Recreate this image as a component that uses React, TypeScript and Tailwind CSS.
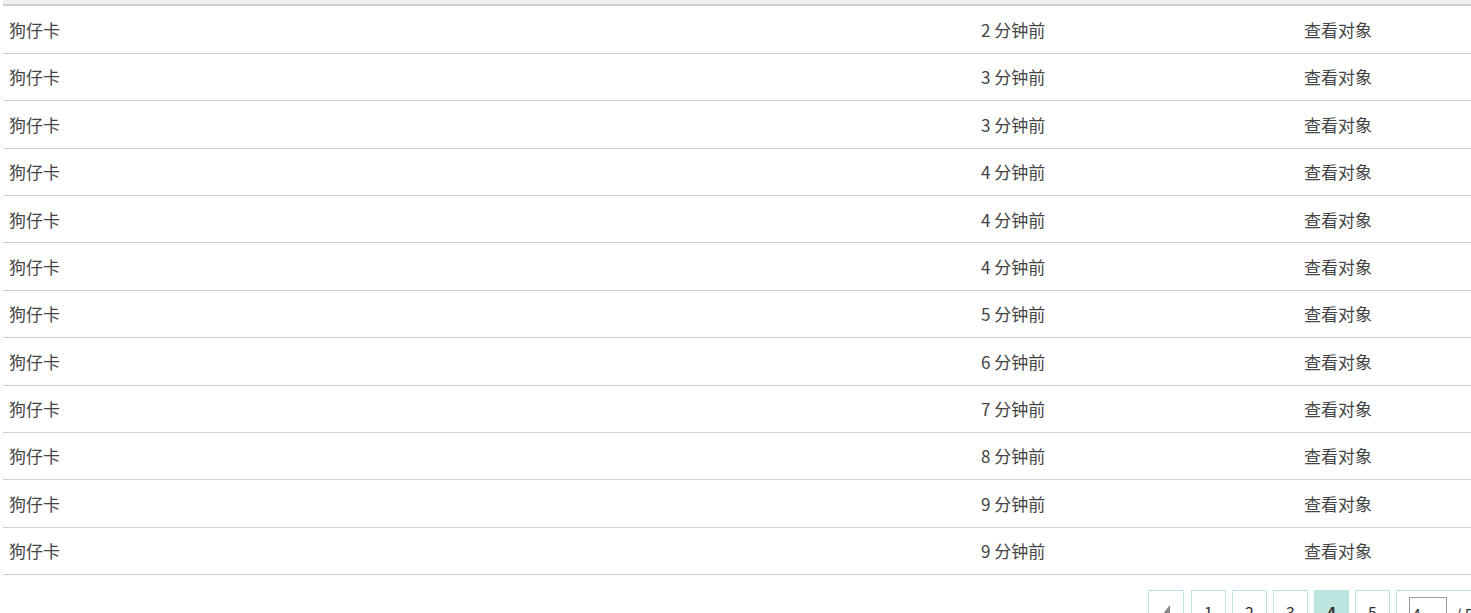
import React from 'react';

const times = ['2', '3', '3', '4', '4', '4', '5', '6', '7', '8', '9', '9'];

const PageButton: React.FC<{ label: React.ReactNode; active?: boolean }> = ({ label, active }) => (
    <div
        className={`flex h-[38px] w-[35px] shrink-0 justify-center border border-[#b8e4de] pt-[11px] text-[16px] leading-[20px] text-[#333] ${
            active ? 'bg-[#bde5df] font-bold' : 'bg-white'
        }`}
    >
        {label}
    </div>
);

const App: React.FC = () => {
    return (
        <div
            className="h-[613px] w-[1471px] overflow-hidden bg-white text-[#444]"
            style={{ fontFamily: '"Microsoft YaHei", "Noto Sans CJK SC", "Liberation Sans", sans-serif' }}
        >
            <div className="ml-[3px] w-[1500px]">
                <div className="box-content h-[4px] border-b-2 border-[#cccccc] bg-[#f0f0f0]" />
                <table className="w-[1500px] border-collapse text-[17px]">
                    <tbody>
                        {times.map((t, i) => (
                            <tr key={i} className="h-[47.4px] border-b border-[#cfcfcf]">
                                <td className="w-[972px] pl-[6px]">狗仔卡</td>
                                <td className="w-[323px] pl-[6px]">{t} 分钟前</td>
                                <td className="pl-[6px]">查看对象</td>
                            </tr>
                        ))}
                    </tbody>
                </table>
            </div>
            <div className="mt-[15px] flex w-max items-start gap-[6px] pl-[1148px]">
                <div className="mr-[1px] flex h-[38px] w-[36px] shrink-0 items-start justify-center border border-[#b8e4de] pt-[14px]">
                    <svg width="8" height="10" viewBox="0 0 8 10">
                        <polygon points="8,0 8,10 0,10" fill="#888" />
                    </svg>
                </div>
                <PageButton label="1" />
                <PageButton label="2" />
                <PageButton label="3" />
                <PageButton label="4" active />
                <PageButton label="5" />
                <div className="flex h-[38px] w-[120px] shrink-0 items-start gap-[8px] border border-[#b8e4de] pl-[12px] pt-[6px] text-[16px] text-[#333]">
                    <div className="h-[26px] w-[38px] shrink-0 border border-[#999] pl-[2px] pt-[4px] leading-[24px]">4</div>
                    <span className="pt-[5px]">/ 5</span>
                </div>
            </div>
        </div>
    );
};

export default App;
